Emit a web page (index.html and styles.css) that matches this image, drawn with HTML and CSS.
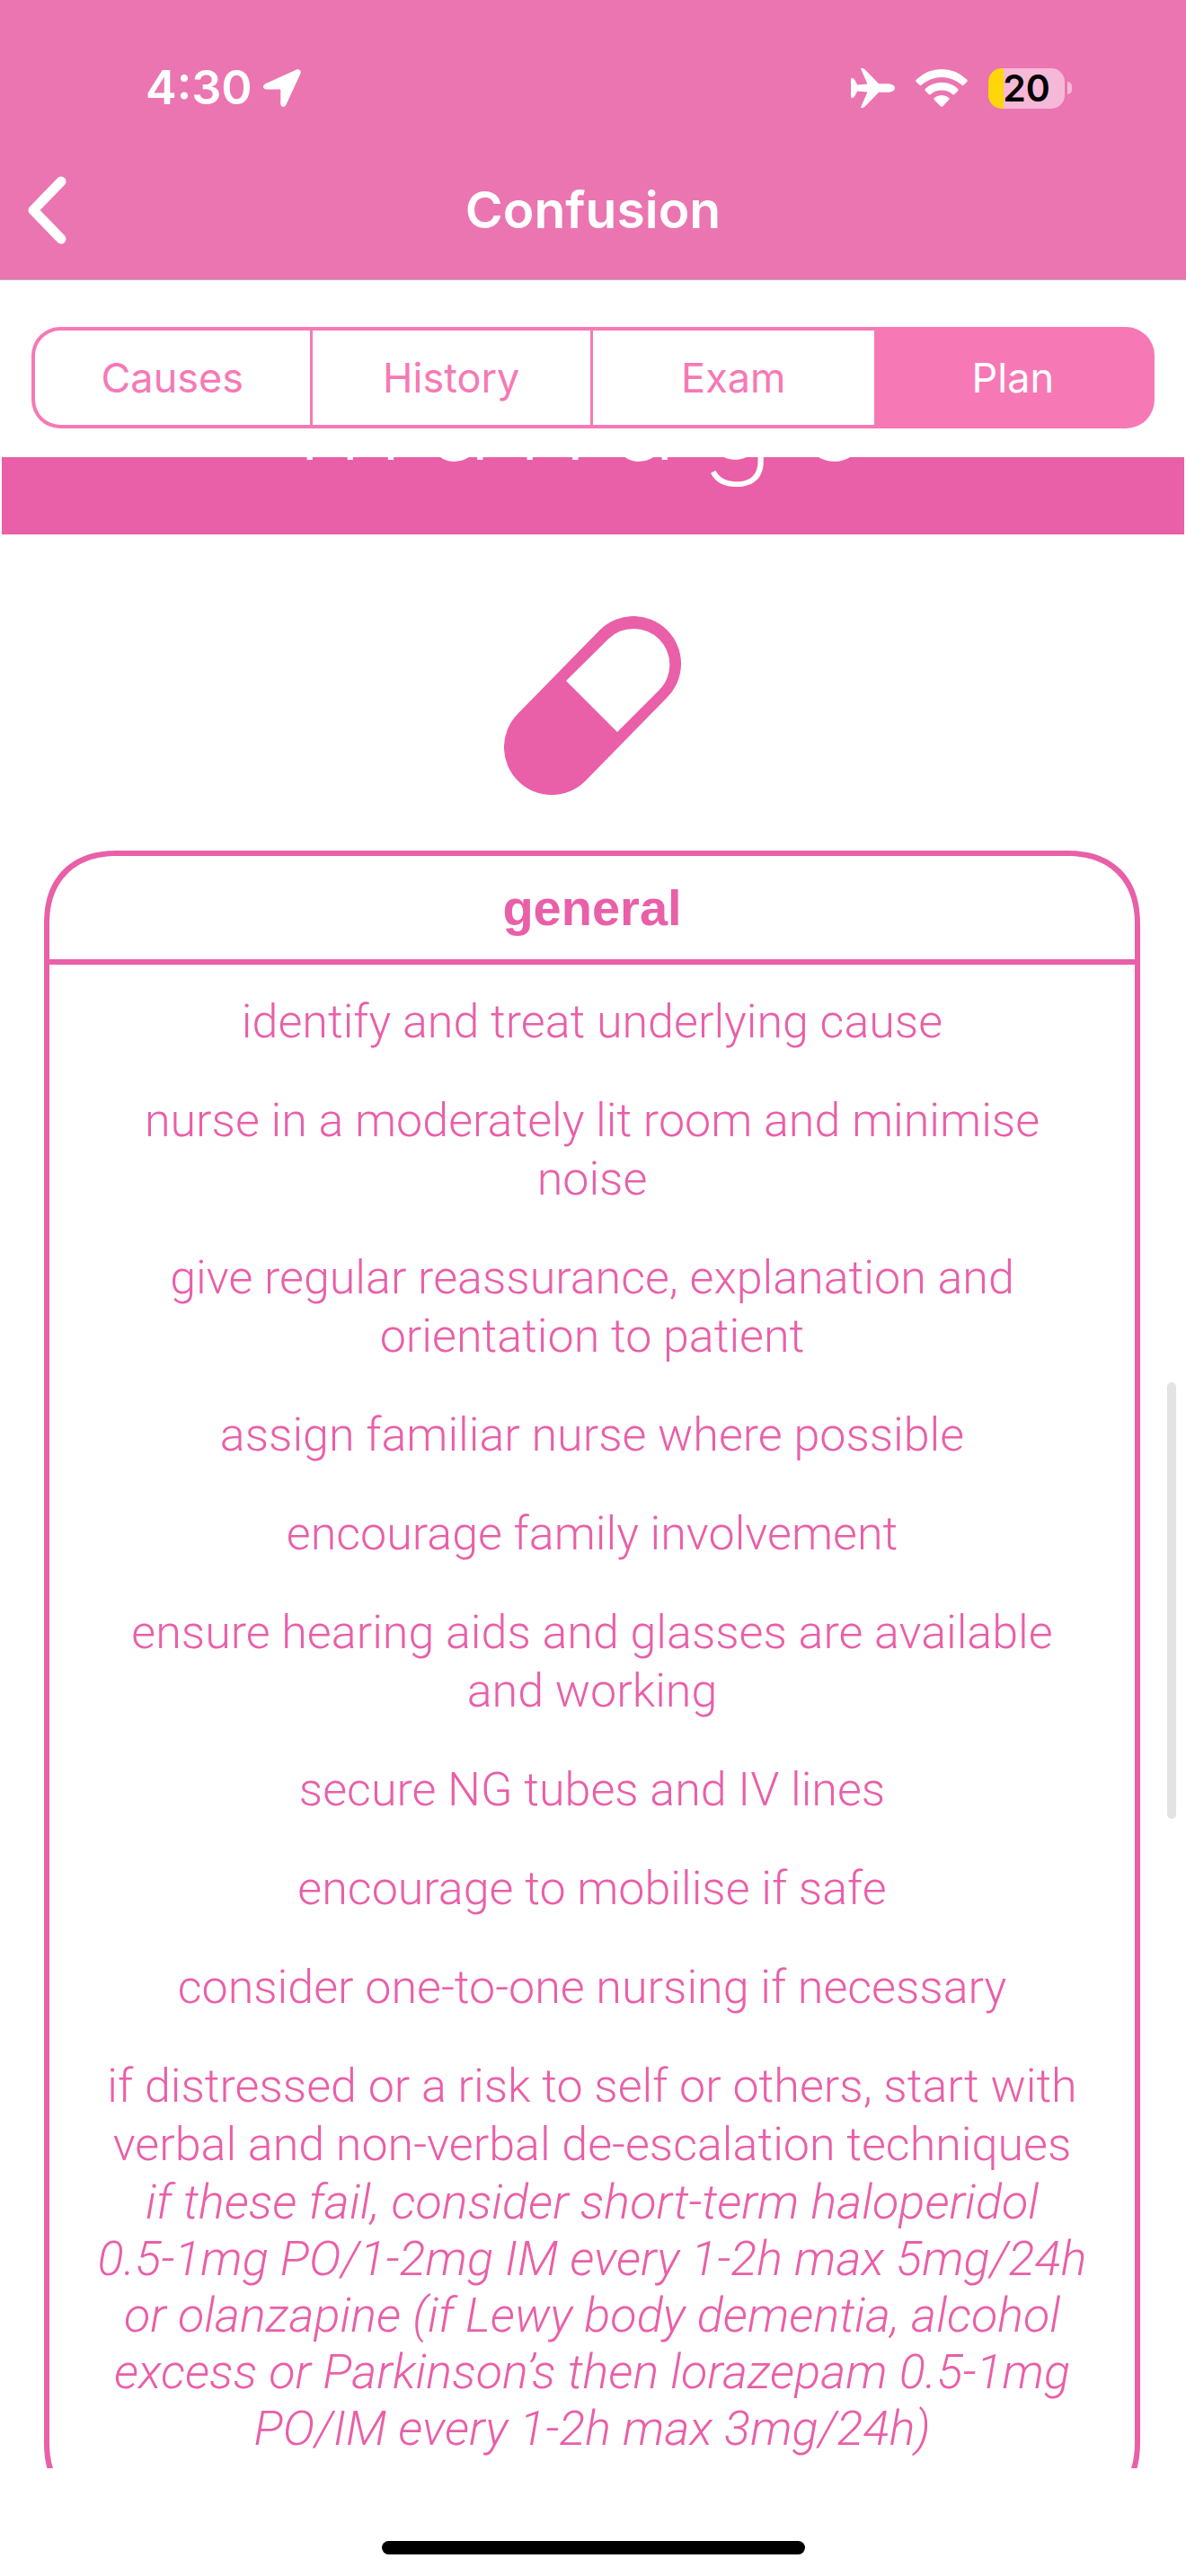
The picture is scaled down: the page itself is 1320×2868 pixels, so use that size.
FILE: index.html
```html
<!DOCTYPE html>
<html lang="en">
<head>
  <meta charset="utf-8">
  <meta name="viewport" content="width=device-width, initial-scale=1">
  <title>Confusion – Plan</title>
  <link rel="stylesheet" href="styles.css">
</head>
<body>
  <div class="app">
    <header class="header">
      <div class="status">
        <div class="status-left">
          <span class="time">4:30</span>
          <svg class="icon-location" viewBox="0 0 42 42" aria-hidden="true">
            <path d="M36.500 0.800 C39.800 -0.800 42.600 1.500 41.400 5 L25.500 39.500 C23.800 43 19.300 42.300 19.300 38.400 L19.300 23.200 Q19.300 22.500 18.600 22.500 L3.500 22.500 C-0.600 22.500 -1.200 18 2.400 16.300 Z"/>
          </svg>
        </div>
        <div class="status-right">
          <svg class="icon-plane" viewBox="0 0 49 44" aria-hidden="true">
            <path d="M11 0.500 Q10.300 0 12.500 0 Q14.800 0 16 1.700 L31 17.300 L42.500 17.300 Q49 18.300 49 22 Q49 25.700 42.500 26.700 L31 26.700 L16 42.300 Q14.800 44 12.500 44 Q10.300 44 11 43.500 L18.500 26.500 L7.300 25.600 L4.200 31.300 Q3.300 33 1.500 33 Q0 33 0 32 L0 12 Q0 11 1.500 11 Q3.300 11 4.200 12.700 L7.300 18.400 L18.500 17.500 Z"/>
          </svg>
          <svg class="icon-wifi" viewBox="0 0 58 42" aria-hidden="true">
            <path d="M1 11.500 Q13 0 29 0 Q45 0 57 11.500 Q58.500 13 57 14.300 L53.500 17.800 Q52.500 18.700 51.300 17.600 Q41.500 9 29 9 Q16.500 9 6.700 17.600 Q5.500 18.700 4.500 17.800 L1 14.300 Q-0.500 13 1 11.500 Z"/>
            <path d="M11 21.700 Q18.700 14.800 29 14.800 Q39.300 14.800 47 21.700 Q48.300 23 47 24.300 L43.300 28 Q42.300 28.900 41.200 28 Q36 23.600 29 23.600 Q22 23.600 16.800 28 Q15.700 28.900 14.700 28 L11 24.300 Q9.700 23 11 21.700 Z"/>
            <path d="M21 31.800 Q24.500 29 29 29 Q33.500 29 37 31.800 Q38.300 33 37 34.300 L30.300 41.200 Q29 42.400 27.700 41.200 L21 34.300 Q19.700 33 21 31.800 Z"/>
          </svg>
          <div class="battery"><span class="battery-body">20</span><span class="battery-cap"></span></div>
        </div>
      </div>
      <div class="navbar">
        <button class="back" type="button" aria-label="Back">
          <svg class="icon-back" viewBox="0 0 44 76" aria-hidden="true"><path d="M38 6 L7 38 L38 70"/></svg>
        </button>
        <h1 class="title">Confusion</h1>
      </div>
    </header>

    <nav class="tabs" aria-label="Sections">
      <button class="tab" type="button">Causes</button>
      <button class="tab" type="button">History</button>
      <button class="tab" type="button">Exam</button>
      <button class="tab tab-active" type="button" aria-current="page">Plan</button>
    </nav>

    <main class="content">
      <h2 class="banner">manage</h2>
      <svg class="pill" viewBox="0 0 198 200" aria-hidden="true">
        <path d="M106.500 15.500 A53 53 0 0 1 181.500 90.500 L90.500 183.500 A53 53 0 0 1 15.500 108.500 Z M69 72 L126 129 L172.500 82.500 A40 40 0 0 0 116 25.500 Z"/>
      </svg>
      <section class="card">
        <h3 class="card-title">general</h3>
        <div class="card-body">
          <p>identify and treat underlying cause</p>
          <p>nurse in a moderately lit room and minimise noise</p>
          <p>give regular reassurance, explanation and orientation to patient</p>
          <p>assign familiar nurse where possible</p>
          <p>encourage family involvement</p>
          <p>ensure hearing aids and glasses are available and working</p>
          <p>secure NG tubes and IV lines</p>
          <p>encourage to mobilise if safe</p>
          <p>consider one-to-one nursing if necessary</p>
          <div class="escalation">
            <p>if distressed or a risk to self or others, start with verbal and non-verbal de-escalation techniques</p>
            <p class="dosing">if these fail, consider short-term haloperidol<br>0.5-1mg PO/1-2mg IM every 1-2h max 5mg/24h or olanzapine (if Lewy body dementia, alcohol excess or Parkinson’s then lorazepam 0.5-1mg PO/IM every 1-2h max 3mg/24h)</p>
          </div>
        </div>
      </section>
      <div class="scroll-thumb"></div>
    </main>

    <footer class="home"><div class="home-bar"></div></footer>
  </div>
</body>
</html>
```
FILE: styles.css
```css
:root {
  --nav: #eb75b0;
  --tab: #f679b5;
  --pink: #e95fa8;
}

* {
  box-sizing: border-box;
}

body,
h1,
h2,
h3,
p {
  margin: 0;
}

body {
  background: #fff;
  font-family: Inter, "Liberation Sans", sans-serif;
}

button {
  font: inherit;
  border: 0;
  padding: 0;
  background: none;
  cursor: pointer;
}

.app {
  display: flex;
  flex-direction: column;
  height: 100vh;
}

/* Status bar and navigation bar */
.header {
  background: var(--nav);
  border-bottom: 1px solid #bcb4b8;
  color: #fff;
}

.status {
  display: flex;
  align-items: center;
  justify-content: space-between;
  height: 156px;
  padding: 40px 127px 0 162px;
}

.status svg {
  fill: currentColor;
}

.status-left,
.status-right {
  display: flex;
  align-items: center;
}

.status-left {
  gap: 12px;
}

.status-right {
  gap: 23px;
}

.time {
  font-size: 52px;
  font-weight: 600;
  line-height: 64px;
}

.icon-location {
  width: 42px;
  height: 42px;
}

.icon-plane {
  width: 49px;
  height: 44px;
}

.icon-wifi {
  width: 58px;
  height: 42px;
}

.battery {
  display: flex;
  align-items: center;
  gap: 3px;
}

.battery-body {
  width: 85px;
  height: 45px;
  border-radius: 15px;
  background: linear-gradient(to right, #ffd60a 20%, #f5b9d8 20%);
  color: #000;
  font-size: 41px;
  font-weight: 600;
  line-height: 45px;
  text-align: center;
}

.battery-cap {
  width: 5px;
  height: 14px;
  border-radius: 0 5px 5px 0;
  background: #f5b9d8;
}

.navbar {
  display: grid;
  grid-template-columns: 1fr auto 1fr;
  align-items: center;
  height: 155px;
}

.back {
  justify-self: start;
  padding: 0 30px;
  color: inherit;
}

.icon-back {
  display: block;
  width: 44px;
  height: 76px;
  fill: none;
  stroke: currentColor;
  stroke-width: 11;
  stroke-linecap: round;
  stroke-linejoin: round;
}

.title {
  font-size: 57px;
  font-weight: 600;
  line-height: 70px;
}

/* Segmented control */
.tabs {
  display: grid;
  grid-template-columns: repeat(4, 1fr);
  margin: 52px 35px 32px;
  height: 113px;
  flex: none;
}

.tab {
  border: 4px solid var(--tab);
  border-width: 4px 3px 4px 0;
  color: var(--tab);
  font-size: 45px;
  line-height: 56px;
}

.tab:first-child {
  border-left-width: 4px;
  border-radius: 32px 0 0 32px;
}

.tab:nth-child(3) {
  border-right-width: 0;
}

.tab:last-child {
  border-radius: 0 32px 32px 0;
}

.tab-active {
  background: var(--tab);
  color: #fff;
}

/* Scrolling content */
.content {
  position: relative;
  flex: 1;
  min-height: 0;
  overflow: hidden;
}

.banner {
  margin: -174px 2px 0;
  padding: 42px 0 50px;
  background: var(--pink);
  color: #fff;
  font-size: 140px;
  font-weight: 200;
  line-height: 168px;
  letter-spacing: 24px;
  text-align: center;
}

.pill {
  display: block;
  width: 198px;
  height: 200px;
  margin: 91px auto 61px;
  fill: var(--pink);
  fill-rule: evenodd;
}

.card {
  margin: 0 51px 0 49px;
  padding-bottom: 60px;
  border: 6px solid var(--pink);
  border-radius: 74px;
  color: var(--pink);
  text-align: center;
}

@supports (corner-shape: superellipse(1.2)) {
  .card {
    border-radius: 82px;
    corner-shape: superellipse(1.2);
  }
}

.card-title {
  padding: 26px 0 25px;
  border-bottom: 6px solid var(--pink);
  font-family: "Liberation Sans", sans-serif;
  font-size: 56px;
  font-weight: 700;
  line-height: 64px;
}

.card-body {
  display: flex;
  flex-direction: column;
  gap: 45px;
  padding: 31px 48px 0;
  font-family: Roboto, sans-serif;
  font-size: 52px;
  font-weight: 300;
  line-height: 65px;
}

.dosing {
  font-size: 54px;
  font-style: italic;
  line-height: 63px;
}

.scroll-thumb {
  position: absolute;
  top: 46%;
  right: 11px;
  width: 10px;
  height: 486px;
  border-radius: 5px;
  background: #e3e3e3;
}

/* Home indicator */
.home {
  display: flex;
  justify-content: center;
  padding: 81px 0 24px;
}

.home-bar {
  width: 471px;
  height: 15px;
  border-radius: 8px;
  background: #000;
}
```
